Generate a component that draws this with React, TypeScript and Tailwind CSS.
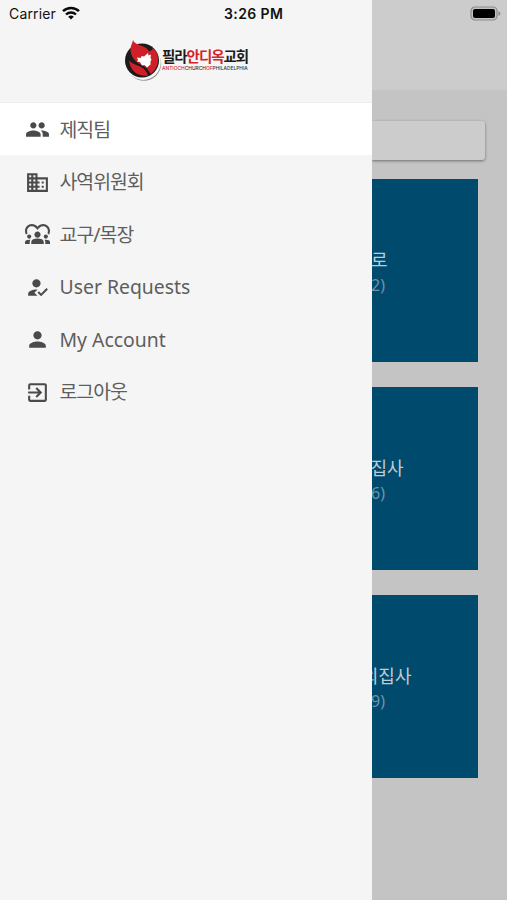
import {
  MdBusiness,
  MdDiversity1,
  MdExitToApp,
  MdHowToReg,
  MdPeople,
  MdPerson,
} from "react-icons/md";
import type { IconType } from "react-icons";

interface MenuItem {
  label: string;
  icon: IconType;
  tracking: string;
  active?: boolean;
}

interface Group {
  name: string;
  count: string;
  inset: string;
}

const menu: MenuItem[] = [
  { label: "제직팀", icon: MdPeople, tracking: "tracking-[-1px]", active: true },
  { label: "사역위원회", icon: MdBusiness, tracking: "tracking-[-1px]" },
  { label: "교구/목장", icon: MdDiversity1, tracking: "tracking-[-0.95px]" },
  { label: "User Requests", icon: MdHowToReg, tracking: "tracking-normal" },
  { label: "My Account", icon: MdPerson, tracking: "tracking-normal" },
  { label: "로그아웃", icon: MdExitToApp, tracking: "tracking-[-1px]" },
];

const groups: Group[] = [
  { name: "로", count: "2)", inset: "pr-[90px]" },
  { name: "집사", count: "6)", inset: "pr-[74px]" },
  { name: "의집사", count: "9)", inset: "pr-[66px]" },
];

function WifiIcon() {
  return (
    <svg viewBox="0 0 18 14" className="h-[14px] w-[18px]" fill="none" stroke="#0a0a0a">
      <path d="M1 5.2a11.5 11.5 0 0 1 16 0" strokeWidth="2.5" />
      <path d="M4 8.5a7.2 7.2 0 0 1 10 0" strokeWidth="2.4" />
      <path d="M9 13.6 6.2 10.8a4 4 0 0 1 5.6 0Z" fill="#0a0a0a" stroke="none" />
    </svg>
  );
}

function BatteryIcon() {
  return (
    <svg viewBox="0 0 31 15" className="h-[15px] w-[31px]">
      <rect x="1" y="1" width="26" height="13" rx="4" fill="#c2c2c2" stroke="#8b8b8b" strokeWidth="1.2" />
      <rect x="3" y="3" width="22" height="9" rx="2" fill="#000" />
      <path d="M28.4 5.2c2.6.9 2.6 3.7 0 4.6Z" fill="#8b8b8b" />
    </svg>
  );
}

function Logo() {
  return (
    <div className="flex">
      <svg viewBox="0 0 37 42" className="h-[42px] w-[37px] shrink-0">
        <circle cx="19" cy="23.5" r="17.2" fill="#8f8f8f" />
        <circle cx="18.2" cy="22.3" r="17.6" fill="#f5f5f5" />
        <circle cx="17" cy="20.5" r="17" fill="#1c1a1b" />
        {/* upper flame */}
        <path
          d="M8 0c1.5 3.500 5 4.500 9 6 3.500 1.200 6 3 7 5.500l-3.500-.5c4.500 1 7-1 7.500-3 3.500 3 5.500 8 5 13-.6 6-3.500 10.500-7.500 13-2-4.500-5-7.500-10-9.500C10.500 22 5 16 5.500 8.500 5.700 5 7.500 3.500 8 0Z"
          fill="#cf2027"
        />
        {/* lower leaf */}
        <path d="M4 20c2 3.500 6.500 4.500 11 6.500 4 1.800 7 5 8 9C15 37 5 32.500 4 20Z" fill="#cf2027" />
        <path
          d="m12 17.500 4 .5.500-2 2.500.5 4-3.500.5 2.500 2.500-1-.5 3.500 1 1.500-1 2 0 3-3.500 3-2.500-2.500-2.500.5-2-3.500-3-.500 1-1.500Z"
          fill="#fff"
        />
      </svg>
      <div className="flex flex-col pt-[6.5px] whitespace-nowrap">
        <span className="font-['Noto_Sans_CJK_KR',sans-serif] text-[14.5px] leading-[18px] font-bold tracking-[-1.05px] text-[#1c1a1b]">
          필라<span className="text-[#d4242b]">안디옥</span>교회
        </span>
        <span className="font-['Inter',sans-serif] text-[4.9px] leading-[6px] font-medium text-[#333]">
          <span className="text-[#d4242b]">ANTIOCH</span>CHURCH<span className="text-[#d4242b]">OF</span>PHILADELPHIA
        </span>
      </div>
    </div>
  );
}

function MenuRow({ label, icon: Icon, tracking, active }: MenuItem) {
  return (
    <li className={`flex h-[51.5px] items-center pt-[1.5px] pl-[25px] ${active ? "bg-white" : ""}`}>
      <Icon className="size-[25px] shrink-0 text-[#4a4a4a]" />
      <span className={`ml-[9.5px] text-[19.4px] leading-none whitespace-nowrap text-[#5e5e5e] ${tracking}`}>
        {label}
      </span>
    </li>
  );
}

function GroupCard({ name, count, inset }: Group) {
  return (
    <div className="mr-[29.5px] flex h-[183px] flex-col items-end bg-[#004a6e] pt-[69px]">
      <span className={`text-[18px] leading-[24px] whitespace-nowrap text-[#bfcbd2] ${inset}`}>{name}</span>
      <span className="pr-[92.5px] text-[16px] leading-[26px] text-[#6f93aa]">{count}</span>
    </div>
  );
}

export default function App() {
  return (
    <div className="flex h-[900px] w-[507px] overflow-hidden bg-[#c4c4c4] font-['Noto_Sans','Noto_Sans_CJK_KR',sans-serif]">
      <aside className="flex w-[372.4px] shrink-0 flex-col bg-[#f5f5f5]">
        <div className="flex h-[26px] items-center pl-[9px] font-['Inter',sans-serif] text-[#111]">
          <span className="w-[53px] text-[14px] tracking-[0.15px]">Carrier</span>
          <WifiIcon />
          <span className="ml-[144px] text-[14px] font-semibold tracking-[0.4px] whitespace-nowrap">3:26 PM</span>
        </div>
        <div className="flex h-[77px] border-b border-[#ececec] pt-[14px] pl-[125px]">
          <Logo />
        </div>
        <ul className="flex flex-col gap-px">
          {menu.map((item) => (
            <MenuRow key={item.label} {...item} />
          ))}
        </ul>
      </aside>

      <main className="flex min-w-0 flex-1 flex-col overflow-hidden">
        <header className="flex h-[90px] shrink-0 items-start justify-end bg-[#cccccc] pt-[6px] pr-[6px]">
          <BatteryIcon />
        </header>
        <div className="mt-[31px] mr-[22px] h-[39px] shrink-0 rounded-r-[3px] bg-[#cccccc] shadow-[0_1px_3px_rgba(0,0,0,0.45)]" />
        <section className="mt-[19px] flex flex-col gap-[25px]">
          {groups.map((group) => (
            <GroupCard key={group.name} {...group} />
          ))}
        </section>
      </main>
    </div>
  );
}
